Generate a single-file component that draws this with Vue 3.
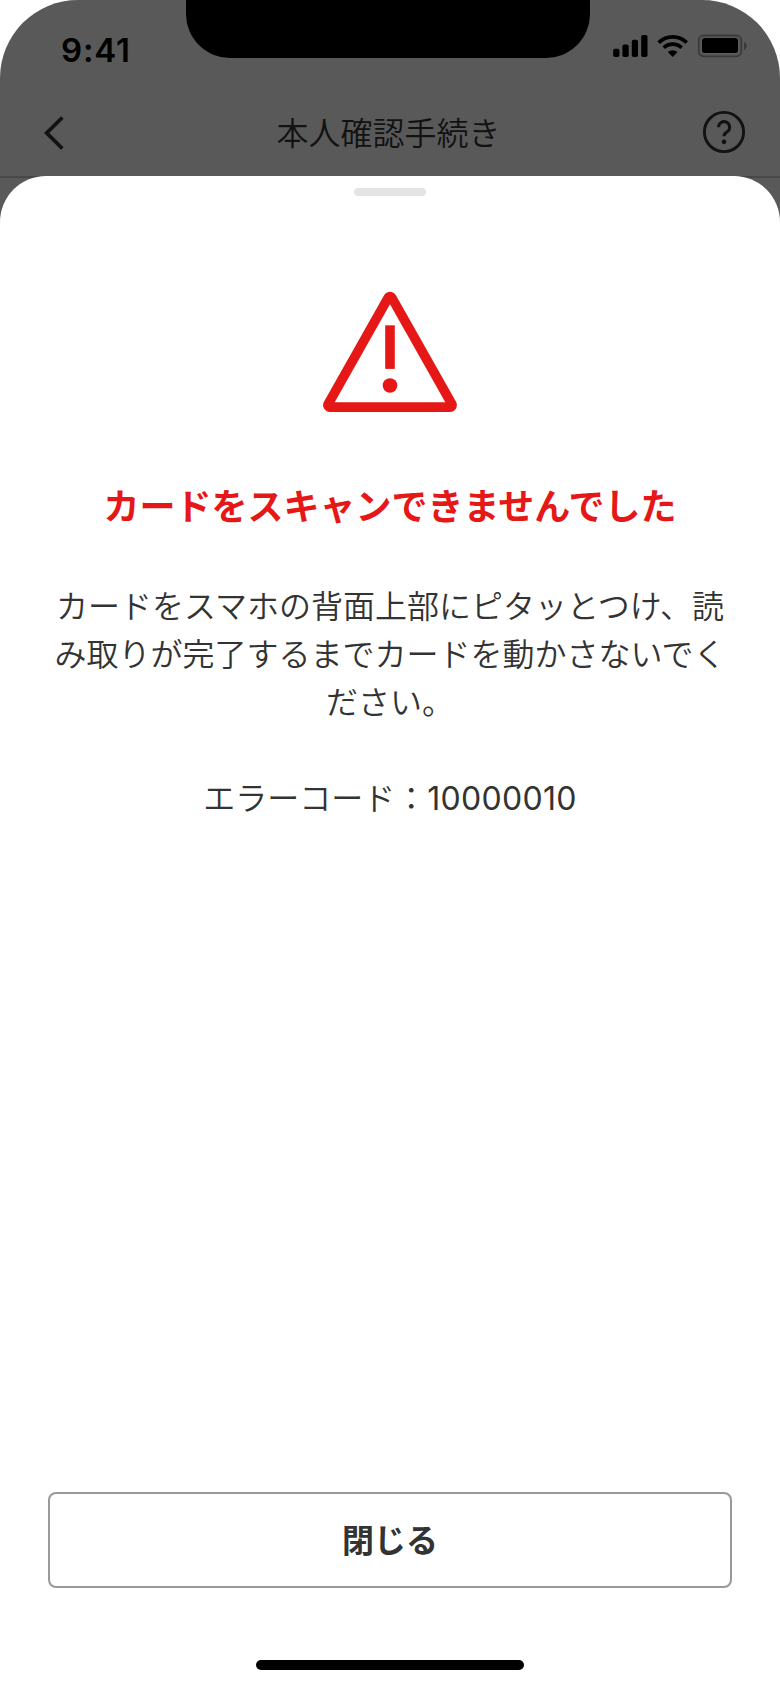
<script setup>
const title = '本人確認手続き'
const heading = 'カードをスキャンできませんでした'
const message = 'カードをスマホの背面上部にピタッとつけ、読み取りが完了するまでカードを動かさないでください。'
const errorCode = '10000010'
</script>

<template>
  <div class="phone">
    <div class="notch"></div>
    <div class="status-bar">
      <span class="time">9:41</span>
      <svg class="status-icons" width="136" height="24" viewBox="612 34 136 24">
        <rect x="613.2" y="48.7" width="6.2" height="8.3" rx="1.8" />
        <rect x="622.4" y="44.5" width="6.3" height="12.5" rx="1.8" />
        <rect x="631.8" y="39.8" width="6.2" height="17.2" rx="1.8" />
        <rect x="641.2" y="35" width="6.3" height="22" rx="1.8" />
        <g fill="none" stroke="#000" stroke-width="3.7">
          <path d="M658.7 42.6a20.2 20.2 0 0 1 28 0" />
          <path d="M663.8 47.7a12.7 12.7 0 0 1 17.8 0" />
        </g>
        <path d="M667.8 52.1a7.4 7.4 0 0 1 9.8 0l-4.9 4.9z" />
        <rect x="698.8" y="35.5" width="42.4" height="20.8" rx="5" fill="none" stroke="#3a3a3a" stroke-width="1.8" />
        <rect x="702" y="38" width="36" height="15" rx="2.8" />
        <path d="M744 42c3.8 1.6 3.8 6.400 0 8z" fill="#3a3a3a" />
      </svg>
    </div>
    <header class="nav">
      <svg class="back" width="24" height="40" viewBox="42 113 24 40">
        <path d="M62.300 117.500 46.700 133l15.600 15.500" fill="none" stroke="#121212" stroke-width="3.800" />
      </svg>
      <h1 class="title">{{ title }}</h1>
      <svg class="help" width="44" height="44" viewBox="702 110 44 44">
        <circle cx="724" cy="132" r="19.600" fill="none" stroke="#121212" stroke-width="2.900" />
        <path d="M718.600 127.300a5.500 5.500 0 1 1 8.900 4.200c-2.300 1.500-3.600 2.200-3.600 4.700" fill="none" stroke="#121212" stroke-width="3" />
        <circle cx="724" cy="141.800" r="2.400" fill="#121212" />
      </svg>
    </header>
    <main class="sheet">
      <div class="handle"></div>
      <svg class="warning" width="136" height="122" viewBox="322 291 136 122">
        <path d="M390 298.600 329.900 405.200H450.100Z" fill="#e61717" stroke="#e61717" stroke-width="13.600" stroke-linejoin="round" />
        <path d="M390 304.300 334.700 402.300H445.300Z" fill="#fff" />
        <path d="M385.200 325.300h9.600v43.600h-9.600z" fill="#e61717" />
        <circle cx="390" cy="385.500" r="7.300" fill="#e61717" />
      </svg>
      <h2 class="heading">{{ heading }}</h2>
      <p class="message">{{ message }}</p>
      <p class="code">エラーコード：<span class="digits">{{ errorCode }}</span></p>
      <button class="close" type="button">閉じる</button>
      <div class="home-indicator"></div>
    </main>
  </div>
</template>

<style>
body {
  margin: 0;
  background: #fff;
}
</style>

<style scoped>
.phone {
  position: relative;
  display: flex;
  flex-direction: column;
  width: 780px;
  height: 1688px;
  overflow: hidden;
  border-radius: 78px 78px 0 0;
  background: linear-gradient(#595959 176px, #484848 176px, #484848 178px, #595959 178px);
  font-family: Inter, "Noto Sans CJK JP", sans-serif;
}
.notch {
  position: absolute;
  top: 0;
  left: 186px;
  width: 404px;
  height: 58px;
  border-radius: 0 0 44px 44px;
  background: #000;
}
.status-bar {
  display: flex;
  justify-content: space-between;
  height: 88px;
  box-sizing: border-box;
  padding: 34px 32px 0 61px;
}
.time {
  font-size: 33px;
  line-height: 32px;
  font-weight: 600;
  letter-spacing: 0.8px;
  color: #000;
}
.nav {
  display: flex;
  align-items: center;
  justify-content: space-between;
  height: 88px;
  box-sizing: border-box;
  padding: 0 34px 0 42px;
}
.back {
  margin: 2px 9px 0 0;
}
.title {
  margin: 3px 0 0;
  font-size: 32px;
  line-height: 48px;
  font-weight: 350;
  color: #121212;
}
.sheet {
  display: flex;
  flex: 1;
  flex-direction: column;
  align-items: center;
  box-sizing: border-box;
  padding: 12px 48px 18px;
  border-radius: 46px 46px 0 0;
  background: #fff;
  color: #333;
}
.handle {
  width: 72px;
  height: 8px;
  border-radius: 4px;
  background: #e2e5e4;
}
.warning {
  margin-top: 95px;
}
.heading {
  margin: 67px 0 0;
  font-size: 36px;
  line-height: 54px;
  font-weight: 700;
  color: #e61717;
  white-space: nowrap;
}
.message,
.code {
  width: 672px;
  margin: 49px 0 0;
  font-size: 32px;
  line-height: 48px;
  font-weight: 350;
  text-align: center;
  word-break: break-all;
}
.code {
  margin-top: 48px;
}
.digits {
  font-weight: 400;
  letter-spacing: 0.3px;
}
.close {
  width: 684px;
  height: 96px;
  margin: auto 0 72px;
  padding: 2px 0 0;
  border: 2px solid #999;
  border-radius: 8px;
  background: #fff;
  color: #333;
  font: 700 32px/48px Inter, "Noto Sans CJK JP", sans-serif;
}
.home-indicator {
  width: 268px;
  height: 10px;
  border-radius: 5px;
  background: #000;
}
</style>
